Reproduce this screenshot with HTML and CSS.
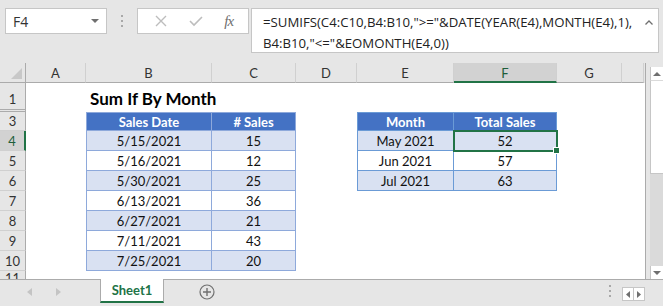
FILE: index.html
```html
<!DOCTYPE html>
<html lang="en">
<head>
    <meta charset="UTF-8">
    <meta name="viewport" content="width=device-width, initial-scale=1.0">
    <title>Sum If By Month</title>
    <link rel="stylesheet" href="styles.css">
</head>
<body>
    <div class="excel">
        <!-- Barra de formulas -->
        <div class="toolbar">
            <div class="namebox">
                <span>F4</span>
                <svg class="namebox-caret" width="8" height="4" viewBox="0 0 8 4"><path d="M0 0h8L4 4z" fill="#6f6f6f"/></svg>
            </div>
            <div class="grip"><i></i><i></i><i></i></div>
            <div class="fx-buttons">
                <svg width="12" height="12" viewBox="0 0 12 12"><path d="M1 1l10 10M11 1L1 11" stroke="#bdbdbd" stroke-width="1.4" fill="none"/></svg>
                <svg width="14" height="12" viewBox="0 0 14 12"><path d="M1 6l4 4L13 2" stroke="#bdbdbd" stroke-width="1.6" fill="none"/></svg>
                <span class="fx">fx</span>
            </div>
            <div class="formula">
                <div class="formula-text">=SUMIFS(C4:C10,B4:B10,"&gt;="&amp;DATE(YEAR(E4),MONTH(E4),1),<br>B4:B10,"&lt;="&amp;EOMONTH(E4,0))</div>
                <svg class="formula-caret" width="8" height="5" viewBox="0 0 8 5"><path d="M0.5 4.5L4 1l3.5 3.5" stroke="#6f6f6f" stroke-width="1.3" fill="none"/></svg>
            </div>
        </div>

        <div class="workarea">
            <div class="grid">
                <div class="row head">
                    <div class="corner"></div>
                    <div class="colhead">A</div>
                    <div class="colhead">B</div>
                    <div class="colhead">C</div>
                    <div class="colhead">D</div>
                    <div class="colhead">E</div>
                    <div class="colhead selected">F</div>
                    <div class="colhead">G</div>
                    <div class="colhead"></div>
                </div>
                <div class="row r1">
                    <div class="rh">1</div>
                    <div></div>
                    <div class="title">Sum If By Month</div>
                    <div></div><div></div><div></div><div></div><div></div><div></div>
                </div>
                <div class="row r2">
                    <div class="rh"></div>
                </div>
                <div class="row r3">
                    <div class="rh">3</div>
                    <div></div>
                    <div class="t th first">Sales Date</div>
                    <div class="t th">#&nbsp;Sales</div>
                    <div></div>
                    <div class="t t2 th first">Month</div>
                    <div class="t t2 th">Total Sales</div>
                    <div></div><div></div>
                </div>
                <div class="row">
                    <div class="rh selected">4</div>
                    <div></div>
                    <div class="t band first">5/15/2021</div>
                    <div class="t band">15</div>
                    <div></div>
                    <div class="t t2 band first">May 2021</div>
                    <div class="t t2 band active">52</div>
                    <div></div><div></div>
                </div>
                <div class="row">
                    <div class="rh">5</div>
                    <div></div>
                    <div class="t first">5/16/2021</div>
                    <div class="t">12</div>
                    <div></div>
                    <div class="t t2 first">Jun 2021</div>
                    <div class="t t2">57</div>
                    <div></div><div></div>
                </div>
                <div class="row">
                    <div class="rh">6</div>
                    <div></div>
                    <div class="t band first">5/30/2021</div>
                    <div class="t band">25</div>
                    <div></div>
                    <div class="t t2 band first">Jul 2021</div>
                    <div class="t t2 band">63</div>
                    <div></div><div></div>
                </div>
                <div class="row">
                    <div class="rh">7</div>
                    <div></div>
                    <div class="t first">6/13/2021</div>
                    <div class="t">36</div>
                </div>
                <div class="row">
                    <div class="rh">8</div>
                    <div></div>
                    <div class="t band first">6/27/2021</div>
                    <div class="t band">21</div>
                </div>
                <div class="row">
                    <div class="rh">9</div>
                    <div></div>
                    <div class="t first">7/11/2021</div>
                    <div class="t">43</div>
                </div>
                <div class="row">
                    <div class="rh">10</div>
                    <div></div>
                    <div class="t band first">7/25/2021</div>
                    <div class="t band">20</div>
                </div>
                <div class="row r11">
                    <div class="rh">11</div>
                </div>
            </div>

            <div class="vscroll">
                <div class="sb-btn">
                    <svg width="8" height="4" viewBox="0 0 8 4"><path d="M0 4h8L4 0z" fill="#6f6f6f"/></svg>
                </div>
                <div class="sb-thumb"></div>
                <div class="sb-track"></div>
                <div class="sb-btn">
                    <svg width="8" height="4" viewBox="0 0 8 4"><path d="M0 0h8L4 4z" fill="#6f6f6f"/></svg>
                </div>
            </div>
        </div>

        <!-- Pestañas -->
        <div class="tabbar">
            <div class="tab-nav">
                <svg width="5" height="8" viewBox="0 0 5 8"><path d="M5 0v8L0 4z" fill="#c4c4c4"/></svg>
                <svg width="5" height="8" viewBox="0 0 5 8"><path d="M0 0v8l5-4z" fill="#c4c4c4"/></svg>
            </div>
            <div class="sheet-tab">Sheet1</div>
            <svg class="add-sheet" width="16" height="16" viewBox="0 0 16 16">
                <circle cx="8" cy="8" r="7" stroke="#707070" stroke-width="1.2" fill="none"/>
                <path d="M8 4v8M4 8h8" stroke="#707070" stroke-width="1.4"/>
            </svg>
            <div class="spacer"></div>
            <div class="grip small"><i></i><i></i><i></i></div>
            <div class="hscroll-nav">
                <span><svg width="4" height="7" viewBox="0 0 4 7"><path d="M4 0v7L0 3.5z" fill="#6f6f6f"/></svg></span>
                <span><svg width="4" height="7" viewBox="0 0 4 7"><path d="M0 0v7l4-3.5z" fill="#6f6f6f"/></svg></span>
            </div>
        </div>
    </div>
</body>
</html>
```

FILE: styles.css
```css
body {
    margin: 0;
    font-family: 'Lato', 'Liberation Sans', sans-serif;
    background-color: #e6e6e6;
}

.excel {
    width: 663px;
    height: 306px;
    overflow: hidden;
    background-color: #e6e6e6;
}

/* Barra superior */
.toolbar {
    height: 63px;
    display: flex;
    align-items: flex-start;
    padding: 8px 0 0 5px;
    box-sizing: border-box;
}

.namebox {
    width: 102px;
    height: 26px;
    box-sizing: border-box;
    background: white;
    border: 1px solid #c6c6c6;
    display: flex;
    align-items: center;
    justify-content: space-between;
    padding: 0 7px 0 7px;
    font-family: 'Open Sans', sans-serif;
    font-size: 14px;
    color: #333;
}

.grip {
    width: 30px;
    height: 26px;
    display: flex;
    flex-direction: column;
    align-items: center;
    justify-content: center;
    gap: 3px;
}

.grip i {
    display: block;
    width: 2px;
    height: 2px;
    background-color: #a8a8a8;
}

.fx-buttons {
    width: 112px;
    height: 26px;
    box-sizing: border-box;
    background: white;
    border: 1px solid #c6c6c6;
    display: flex;
    align-items: center;
    justify-content: space-around;
    padding: 0 4px 0 6px;
}

.fx {
    font-family: 'Liberation Serif', serif;
    font-style: italic;
    font-size: 15px;
    color: #6f6f6f;
    letter-spacing: -1px;
}

.formula {
    margin-left: 2px;
    width: 408px;
    height: 45px;
    box-sizing: border-box;
    background: white;
    border: 1px solid #c6c6c6;
    display: flex;
    justify-content: space-between;
    padding: 3px 5px 0 11px;
}

.formula-text {
    font-family: 'Open Sans', sans-serif;
    font-size: 13.2px;
    line-height: 21px;
    color: #222;
    white-space: nowrap;
}

.formula-caret {
    margin-top: 8px;
}

/* Hoja */
.workarea {
    display: flex;
    height: 216px;
}

.grid {
    width: 646px;
    border-right: 1px solid #ababab;
    box-sizing: border-box;
    background: white;
}

.row {
    display: grid;
    grid-template-columns: 26px 60px 126px 84px 61px 97px 103px 65px 22px;
    height: 20px;
    font-size: 13px;
    color: #111;
}

.row > div {
    box-sizing: border-box;
    display: flex;
    align-items: center;
    justify-content: center;
}

.row.head {
    background-color: #e6e6e6;
}

.corner {
    border-right: 1px solid #ababab;
    border-bottom: 1px solid #ababab;
    position: relative;
}

.corner::after {
    content: "";
    position: absolute;
    right: 3px;
    bottom: 3px;
    border-left: 11px solid transparent;
    border-bottom: 11px solid #c8c8c8;
}

.colhead {
    border-right: 1px solid #d0d0d0;
    border-bottom: 1px solid #ababab;
    color: #333;
    padding-top: 1px;
}

.colhead.selected {
    background-color: #d2d2d2;
    border-bottom: 2px solid #217346;
    color: #1d5e3a;
}

.rh {
    background-color: #e6e6e6;
    border-right: 1px solid #ababab;
    border-bottom: 1px solid #d0d0d0;
    color: #333;
}

.rh.selected {
    background-color: #d2d2d2;
    border-right: 2px solid #217346;
    color: #1d5e3a;
}

.r1 {
    height: 27px;
}

.r1 .rh {
    border-bottom-color: #ababab;
    align-items: flex-end;
    padding-bottom: 2px;
}

.r2 {
    height: 2px;
}

.r2 .rh {
    border-bottom: 1px solid #ababab;
}

.r3 {
    height: 19px;
}

/* Fila 11 cortada por la barra de pestañas */
.r11 {
    height: 8px;
    overflow: hidden;
}

.r11 .rh {
    align-items: flex-start;
    line-height: 13px;
    padding-top: 1px;
    border-bottom: none;
    overflow: hidden;
}

.row > .title {
    justify-content: flex-start;
    align-items: flex-end;
    padding: 0 0 1px 4px;
    font-size: 17px;
    font-weight: bold;
    color: #000;
    white-space: nowrap;
    overflow: visible;
}

/* Tablas de Excel */
.t {
    border-right: 1px solid #8ea9db;
    border-bottom: 1px solid #8ea9db;
}

.t.first {
    border-left: 1px solid #8ea9db;
}

.t2,
.t2.first {
    border-color: #6b9bd6;
}

.th {
    background-color: #4472c4;
    color: white;
    font-weight: bold;
    border-top: 1px solid #8ea9db;
}

.t2.th {
    border-top-color: #6b9bd6;
}

.band {
    background-color: #d9e1f2;
}

.active {
    position: relative;
    outline: 2px solid #217346;
    outline-offset: -1px;
}

.active::after {
    content: "";
    position: absolute;
    right: -4px;
    bottom: -4px;
    width: 5px;
    height: 5px;
    background-color: #217346;
    border: 1px solid white;
}

/* Barra de desplazamiento */
.vscroll {
    width: 17px;
    display: flex;
    flex-direction: column;
    padding: 4px 0 0 4px;
    box-sizing: border-box;
}

.sb-btn {
    height: 13px;
    background: white;
    border-left: 1px solid #c6c6c6;
    display: flex;
    align-items: center;
    justify-content: center;
}

.sb-thumb {
    height: 92px;
    background: white;
    border-left: 1px solid #c6c6c6;
    border-top: 1px solid #dadada;
    border-bottom: 1px solid #c6c6c6;
}

.sb-track {
    flex: 1;
    background-color: #dadada;
}

/* Barra de pestañas */
.tabbar {
    height: 27px;
    border-top: 1px solid #ababab;
    box-sizing: border-box;
    display: flex;
    align-items: flex-start;
}

.tab-nav {
    width: 100px;
    height: 24px;
    display: flex;
    align-items: center;
    gap: 24px;
    padding-left: 27px;
    box-sizing: border-box;
}

.sheet-tab {
    width: 64px;
    height: 24px;
    margin-top: -1px;
    box-sizing: border-box;
    background: white;
    border-left: 1px solid #ababab;
    border-right: 1px solid #ababab;
    border-bottom: 2px solid #217346;
    display: flex;
    align-items: center;
    justify-content: center;
    font-size: 13px;
    font-weight: bold;
    color: #217346;
}

.add-sheet {
    margin: 4px 0 0 35px;
}

.spacer {
    flex: 1;
}

.grip.small {
    width: 8px;
    height: 22px;
    margin-right: 8px;
}

.hscroll-nav {
    display: flex;
    margin: 7px 18px 0 0;
    border: 1px solid #c6c6c6;
}

.hscroll-nav span {
    width: 10px;
    height: 12px;
    background: white;
    display: flex;
    align-items: center;
    justify-content: center;
}

.hscroll-nav span + span {
    border-left: 1px solid #c6c6c6;
}
```
